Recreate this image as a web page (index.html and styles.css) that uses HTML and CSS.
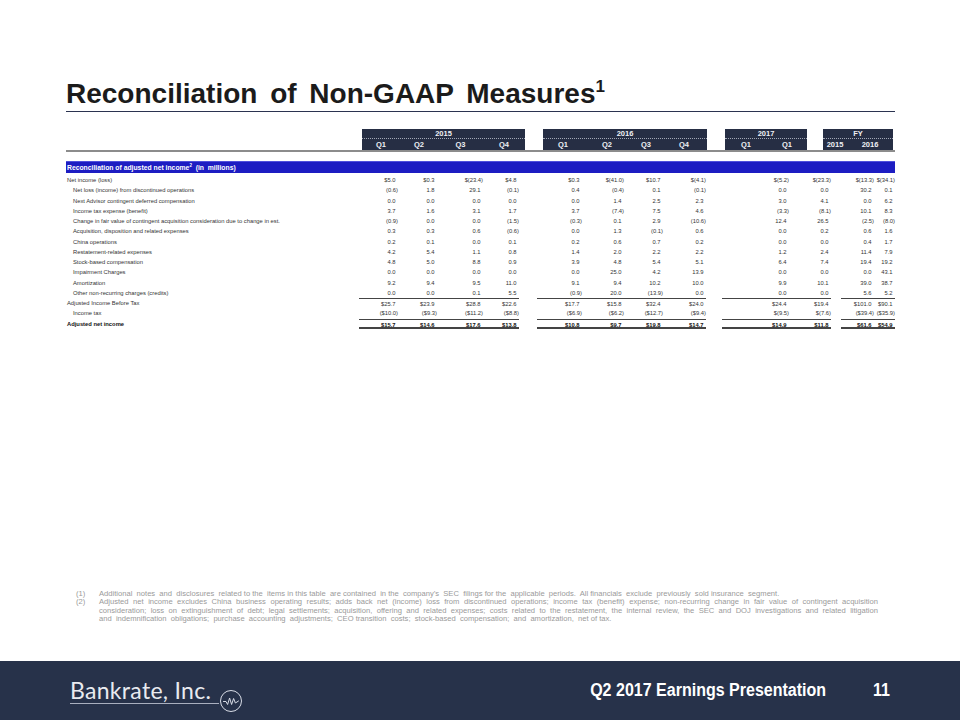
FILE: index.html
```html
<!DOCTYPE html>
<html>
<head>
<meta charset="utf-8">
<link rel="stylesheet" href="styles.css">
</head>
<body>
<div class="slide">
  <main class="content">
    <h1 class="title">Reconciliation of Non-GAAP Measures<sup>1</sup></h1>

    <div class="table">
      <div class="head">
        <div class="blk b15"><div class="yr">2015</div><div class="qs"><span>Q1</span><span>Q2</span><span>Q3</span><span>Q4</span></div></div>
        <div class="blk b16"><div class="yr">2016</div><div class="qs"><span>Q1</span><span>Q2</span><span>Q3</span><span>Q4</span></div></div>
        <div class="blk b17"><div class="yr">2017</div><div class="qs"><span>Q1</span><span>Q1</span></div></div>
        <div class="blk bfy"><div class="yr">FY</div><div class="qs"><span>2015</span><span>2016</span></div></div>
      </div>

      <div class="band">Reconciliation of adjusted net income<sup>2</sup>&nbsp; (in&nbsp; millions)</div>

      <div class="rows">
        <div class="row"><span class="lbl">Net income (loss)</span>
          <div class="g g15"><span>$5.0</span><span>$0.3</span><span class="n">$(23.4)</span><span>$4.8</span></div>
          <div class="g g16"><span>$0.3</span><span class="n">$(41.0)</span><span>$10.7</span><span class="n">$(4.1)</span></div>
          <div class="g g17"><span class="n">$(5.2)</span><span class="n">$(23.3)</span></div>
          <div class="g gfy"><span class="n">$(13.3)</span><span class="n">$(34.1)</span></div>
        </div>
        <div class="row ind"><span class="lbl">Net loss (income) from discontinued operations</span>
          <div class="g g15"><span class="n">(0.6)</span><span>1.8</span><span>29.1</span><span class="n">(0.1)</span></div>
          <div class="g g16"><span>0.4</span><span class="n">(0.4)</span><span>0.1</span><span class="n">(0.1)</span></div>
          <div class="g g17"><span>0.0</span><span>0.0</span></div>
          <div class="g gfy"><span>30.2</span><span>0.1</span></div>
        </div>
        <div class="row ind"><span class="lbl">Next Advisor contingent deferred compensation</span>
          <div class="g g15"><span>0.0</span><span>0.0</span><span>0.0</span><span>0.0</span></div>
          <div class="g g16"><span>0.0</span><span>1.4</span><span>2.5</span><span>2.3</span></div>
          <div class="g g17"><span>3.0</span><span>4.1</span></div>
          <div class="g gfy"><span>0.0</span><span>6.2</span></div>
        </div>
        <div class="row ind"><span class="lbl">Income tax expense (benefit)</span>
          <div class="g g15"><span>3.7</span><span>1.6</span><span>3.1</span><span>1.7</span></div>
          <div class="g g16"><span>3.7</span><span class="n">(7.4)</span><span>7.5</span><span>4.6</span></div>
          <div class="g g17"><span class="n">(3.3)</span><span class="n">(8.1)</span></div>
          <div class="g gfy"><span>10.1</span><span>8.3</span></div>
        </div>
        <div class="row ind"><span class="lbl">Change in fair value of contingent acquisition consideration due to change in est.</span>
          <div class="g g15"><span class="n">(0.9)</span><span>0.0</span><span>0.0</span><span class="n">(1.5)</span></div>
          <div class="g g16"><span class="n">(0.3)</span><span>0.1</span><span>2.9</span><span class="n">(10.6)</span></div>
          <div class="g g17"><span>12.4</span><span>26.5</span></div>
          <div class="g gfy"><span class="n">(2.5)</span><span class="n">(8.0)</span></div>
        </div>
        <div class="row ind"><span class="lbl">Acquisition, disposition and related expenses</span>
          <div class="g g15"><span>0.3</span><span>0.3</span><span>0.6</span><span class="n">(0.6)</span></div>
          <div class="g g16"><span>0.0</span><span>1.3</span><span class="n">(0.1)</span><span>0.6</span></div>
          <div class="g g17"><span>0.0</span><span>0.2</span></div>
          <div class="g gfy"><span>0.6</span><span>1.6</span></div>
        </div>
        <div class="row ind"><span class="lbl">China operations</span>
          <div class="g g15"><span>0.2</span><span>0.1</span><span>0.0</span><span>0.1</span></div>
          <div class="g g16"><span>0.2</span><span>0.6</span><span>0.7</span><span>0.2</span></div>
          <div class="g g17"><span>0.0</span><span>0.0</span></div>
          <div class="g gfy"><span>0.4</span><span>1.7</span></div>
        </div>
        <div class="row ind"><span class="lbl">Restatement-related expenses</span>
          <div class="g g15"><span>4.2</span><span>5.4</span><span>1.1</span><span>0.8</span></div>
          <div class="g g16"><span>1.4</span><span>2.0</span><span>2.2</span><span>2.2</span></div>
          <div class="g g17"><span>1.2</span><span>2.4</span></div>
          <div class="g gfy"><span>11.4</span><span>7.9</span></div>
        </div>
        <div class="row ind"><span class="lbl">Stock-based compensation</span>
          <div class="g g15"><span>4.8</span><span>5.0</span><span>8.8</span><span>0.9</span></div>
          <div class="g g16"><span>3.9</span><span>4.8</span><span>5.4</span><span>5.1</span></div>
          <div class="g g17"><span>6.4</span><span>7.4</span></div>
          <div class="g gfy"><span>19.4</span><span>19.2</span></div>
        </div>
        <div class="row ind"><span class="lbl">Impairment Charges</span>
          <div class="g g15"><span>0.0</span><span>0.0</span><span>0.0</span><span>0.0</span></div>
          <div class="g g16"><span>0.0</span><span>25.0</span><span>4.2</span><span>13.9</span></div>
          <div class="g g17"><span>0.0</span><span>0.0</span></div>
          <div class="g gfy"><span>0.0</span><span>43.1</span></div>
        </div>
        <div class="row ind"><span class="lbl">Amortization</span>
          <div class="g g15"><span>9.2</span><span>9.4</span><span>9.5</span><span>11.0</span></div>
          <div class="g g16"><span>9.1</span><span>9.4</span><span>10.2</span><span>10.0</span></div>
          <div class="g g17"><span>9.9</span><span>10.1</span></div>
          <div class="g gfy"><span>39.0</span><span>38.7</span></div>
        </div>
        <div class="row ind"><span class="lbl">Other non-recurring charges (credits)</span>
          <div class="g g15"><span>0.0</span><span>0.0</span><span>0.1</span><span>5.5</span></div>
          <div class="g g16"><span class="n">(0.9)</span><span>20.0</span><span class="n">(13.9)</span><span>0.0</span></div>
          <div class="g g17"><span>0.0</span><span>0.0</span></div>
          <div class="g gfy"><span>5.6</span><span>5.2</span></div>
        </div>
        <div class="row sub"><span class="lbl">Adjusted Income Before Tax</span>
          <div class="g g15"><span>$25.7</span><span>$23.9</span><span>$28.8</span><span>$22.6</span></div>
          <div class="g g16"><span>$17.7</span><span>$15.8</span><span>$32.4</span><span>$24.0</span></div>
          <div class="g g17"><span>$24.4</span><span>$19.4</span></div>
          <div class="g gfy"><span>$101.0</span><span>$90.1</span></div>
        </div>
        <div class="row ind"><span class="lbl">Income tax</span>
          <div class="g g15"><span class="n">($10.0)</span><span class="n">($9.3)</span><span class="n">($11.2)</span><span class="n">($8.8)</span></div>
          <div class="g g16"><span class="n">($6.9)</span><span class="n">($6.2)</span><span class="n">($12.7)</span><span class="n">($9.4)</span></div>
          <div class="g g17"><span class="n">$(9.5)</span><span class="n">$(7.6)</span></div>
          <div class="g gfy"><span class="n">($39.4)</span><span class="n">($35.9)</span></div>
        </div>
        <div class="row total"><span class="lbl">Adjusted net income</span>
          <div class="g g15"><span>$15.7</span><span>$14.6</span><span>$17.6</span><span>$13.8</span></div>
          <div class="g g16"><span>$10.8</span><span>$9.7</span><span>$19.8</span><span>$14.7</span></div>
          <div class="g g17"><span>$14.9</span><span>$11.8</span></div>
          <div class="g gfy"><span>$61.6</span><span>$54.9</span></div>
        </div>
      </div>
    </div>

    <div class="notes">
      <div class="note">
        <span class="num">(1)</span>
        <div class="txt"><span class="ln last">Additional&nbsp; notes&nbsp; and&nbsp; disclosures&nbsp; related to the&nbsp; items in this table&nbsp; are contained&nbsp; in the&nbsp; company’s&nbsp; SEC&nbsp; filings for the&nbsp; applicable&nbsp; periods.&nbsp; All financials&nbsp; exclude&nbsp; previously&nbsp; sold insurance&nbsp; segment.</span></div>
      </div>
      <div class="note">
        <span class="num">(2)</span>
        <div class="txt">
          <span class="ln">Adjusted net income excludes China business operating results; adds back net (income) loss from discontinued operations; income tax (benefit) expense; non-recurring change in fair value of contingent acquisition</span>
          <span class="ln">consideration; loss on extinguishment of debt; legal settlements; acquisition, offering and related expenses; costs related to the restatement, the internal review, the SEC and DOJ investigations and related litigation</span>
          <span class="ln last">and&nbsp; indemnification&nbsp; obligations;&nbsp; purchase&nbsp; accounting&nbsp; adjustments;&nbsp; CEO transition&nbsp; costs;&nbsp; stock-based&nbsp; compensation;&nbsp; and&nbsp; amortization,&nbsp; net of tax.</span>
        </div>
      </div>
    </div>
  </main>

  <footer class="foot">
    <div class="logo">
      <span class="brand">Bankrate, Inc.</span>
      <svg class="mark" width="24" height="24" viewBox="0 0 24 24" aria-hidden="true">
        <circle cx="12" cy="12" r="10.5" fill="none" stroke="#d8dce6" stroke-width="1"/>
        <path d="M4.5 12.5 L7 12.5 L8.6 15.5 L10.6 9 L12.6 15.5 L14.6 9.5 L16.4 14 L19.5 12" fill="none" stroke="#d8dce6" stroke-width="1" stroke-linejoin="round" stroke-linecap="round"/>
      </svg>
    </div>
    <span class="deck">Q2 2017 Earnings Presentation</span>
    <span class="pg">11</span>
  </footer>
</div>
</body>
</html>
```

FILE: styles.css
```css
* { box-sizing: border-box; margin: 0; padding: 0; }
html, body { width: 960px; height: 720px; overflow: hidden; background: #fff; }
body { font-family: "Liberation Sans", Arial, sans-serif; color: #222; }

.slide { display: flex; flex-direction: column; height: 720px; }
.content { flex: 1; display: flex; flex-direction: column; padding: 0 65px 0 66px; }

.title {
  font-size: 28px; font-weight: bold; color: #1b1b1b;
  line-height: 32px; padding-top: 78px; padding-bottom: 1px;
  border-bottom: 1px solid #2b3350; word-spacing: 5px; white-space: nowrap;
}
.title sup { font-size: 17px; vertical-align: 11px; line-height: 0; }

/* table header */
.table { margin-top: 17px; }
.head { display: flex; align-items: flex-end; padding-left: 296px; border-bottom: 2px solid #8c8c8c; }
.blk { background: #262e44; color: #eef0f4; font-weight: bold; font-size: 7.5px; height: 21px; display: flex; flex-direction: column; }
.yr { height: 10px; line-height: 10px; text-align: center; border-bottom: 1px dotted #a3a8b6; }
.qs { flex: 1; display: grid; align-items: center; text-align: center; }
.b15 { width: 163px; margin-right: 18px; }
.b15 .qs { grid-template-columns: 38px 38px 45px 42px; }
.b16 { width: 164px; margin-right: 18px; }
.b16 .qs { grid-template-columns: 40px 48px 30px 46px; }
.b17 { width: 82px; margin-right: 16px; }
.b17 .qs { grid-template-columns: 42px 40px; }
.bfy { width: 70px; }
.bfy .qs { grid-template-columns: 24px 46px; }

/* blue band */
.band {
  margin-top: 9px; height: 12px; background: #1d1dc2; border-top: 1px solid #5050dc;
  color: #fff; font-weight: bold; font-size: 6.8px; line-height: 11px; padding-left: 1px; white-space: nowrap;
}
.band sup { font-size: 4.5px; vertical-align: 3px; line-height: 0; }

/* rows */
.rows { margin-top: 2px; font-size: 5.8px; color: #333; }
.row { display: flex; height: 10.25px; line-height: 10px; white-space: nowrap; }
.lbl { width: 296px; padding-left: 1px; }
.ind .lbl { padding-left: 7px; }
.g { display: grid; text-align: right; }
.g span { padding-right: 2.5px; }
.g span.n { padding-right: 0; }
.g15 { width: 160px; grid-template-columns: 39px 39px 46px 36px; margin-right: 18px; }
.g16 { width: 169px; grid-template-columns: 45px 42px 39px 43px; margin-right: 16px; }
.g17 { width: 109px; grid-template-columns: 67px 42px; margin-right: 10px; }
.gfy { width: 54px; grid-template-columns: 33px 21px; }
.sub .g { border-top: 1px solid #444; }
.total { font-weight: bold; color: #111; }
.total .g { border-top: 1px solid #444; border-bottom: 2px solid #444; }

/* notes */
.notes { margin-top: auto; margin-bottom: 37px; padding-left: 10px; font-size: 7.6px; line-height: 8.6px; color: #9a9a9a; }
.note { display: flex; }
.num { width: 23px; flex: none; }
.txt { width: 779px; }
.ln { display: block; text-align: justify; text-align-last: justify; white-space: normal; word-spacing: -1.5px; }
.ln.last { text-align-last: left; word-spacing: 0; }

/* footer */
.foot { height: 59px; background: #27324a; display: flex; align-items: center; padding: 0 70px 0 70px; }
.logo { display: flex; align-items: flex-end; }
.brand {
  font-family: Lato, "Open Sans", sans-serif; font-weight: 400; font-size: 23px; color: #e9ebf0;
  line-height: 24px; padding-bottom: 1px; padding-right: 8px; border-bottom: 1px solid #a9afbf; letter-spacing: 0.3px;
}
.mark { margin-bottom: -9px; margin-left: 0; }
.deck {
  margin-left: auto; display: inline-block; transform: scaleX(0.89); transform-origin: right center;
  font-family: "Liberation Sans", sans-serif; font-weight: bold; font-size: 18px; color: #fff;
}
.pg {
  margin-left: 45px; display: inline-block; transform: scaleX(0.89); transform-origin: right center;
  font-family: "Liberation Sans", sans-serif; font-weight: bold; font-size: 18px; color: #fff;
}
```
